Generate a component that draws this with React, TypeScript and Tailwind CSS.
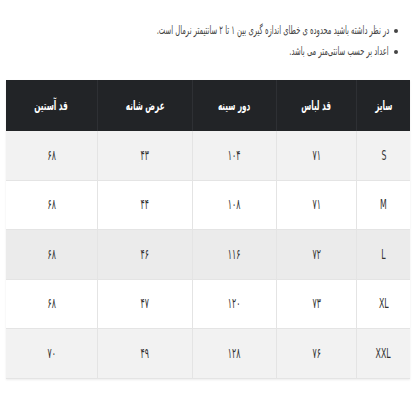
import React from 'react'

const rows = [
  { size: 'S', length: '۷۱', chest: '۱۰۴', shoulder: '۴۳', sleeve: '۶۸', bg: 'bg-[#f2f2f2]' },
  { size: 'M', length: '۷۱', chest: '۱۰۸', shoulder: '۴۴', sleeve: '۶۸', bg: 'bg-white' },
  { size: 'L', length: '۷۲', chest: '۱۱۶', shoulder: '۴۶', sleeve: '۶۸', bg: 'bg-[#ebebeb]' },
  { size: 'XL', length: '۷۳', chest: '۱۲۰', shoulder: '۴۷', sleeve: '۶۸', bg: 'bg-white' },
  { size: 'XXL', length: '۷۶', chest: '۱۲۸', shoulder: '۴۹', sleeve: '۷۰', bg: 'bg-[#f2f2f2]' },
]

const headers = ['سایز', 'قد لباس', 'دور سینه', 'عرض شانه', 'قد آستین']

const App = () => {
  return (
    <div
      dir="rtl"
      className="w-[420px] h-[420px] bg-white text-[#333] overflow-hidden"
      style={{ fontFamily: '"DejaVu Sans Condensed", "DejaVu Sans", sans-serif' }}
    >
      {/* Notes */}
      <ul className="pt-[20px] pr-[22px] text-[12px] leading-[21px] text-[#444]">
        <li className="flex items-center gap-[5px]">
          <span className="w-[4px] h-[4px] rounded-full bg-[#444] shrink-0"></span>
          <span className="inline-block whitespace-nowrap origin-right scale-x-[0.63]">
            در نظر داشته باشید محدوده ی خطای اندازه گیری بین ۱ تا ۲ سانتیمتر نرمال است.
          </span>
        </li>
        <li className="flex items-center gap-[5px]">
          <span className="w-[4px] h-[4px] rounded-full bg-[#444] shrink-0"></span>
          <span className="inline-block whitespace-nowrap origin-right scale-x-[0.63]">
            اعداد بر حسب سانتی‌متر می باشد.
          </span>
        </li>
      </ul>

      {/* Size table */}
      <div className="mt-[18px] mr-[10px] w-[404px] shadow-[0_1px_2px_rgba(0,0,0,0.08)]">
        <div className="grid grid-cols-[54px_80px_84px_95px_91px] h-[51px] bg-[#222427] text-white text-[13px] font-bold">
          {headers.map((h, i) => (
            <div
              key={h}
              className={`flex items-center justify-center ${i < 4 ? 'border-l border-[#2e3034]' : ''}`}
            >
              <span className="inline-block whitespace-nowrap scale-x-[0.62]">{h}</span>
            </div>
          ))}
        </div>
        {rows.map((r) => (
          <div
            key={r.size}
            className={`grid grid-cols-[54px_80px_84px_95px_91px] h-[49.5px] text-[14px] border-b border-[#e4e4e4] ${r.bg}`}
          >
            {[r.size, r.length, r.chest, r.shoulder, r.sleeve].map((v, i) => (
              <div
                key={i}
                className={`flex items-center justify-center ${i < 4 ? 'border-l border-[#e4e4e4]' : ''}`}
              >
                <span className="inline-block whitespace-nowrap scale-x-[0.62]">{v}</span>
              </div>
            ))}
          </div>
        ))}
      </div>
    </div>
  )
}

export default App
